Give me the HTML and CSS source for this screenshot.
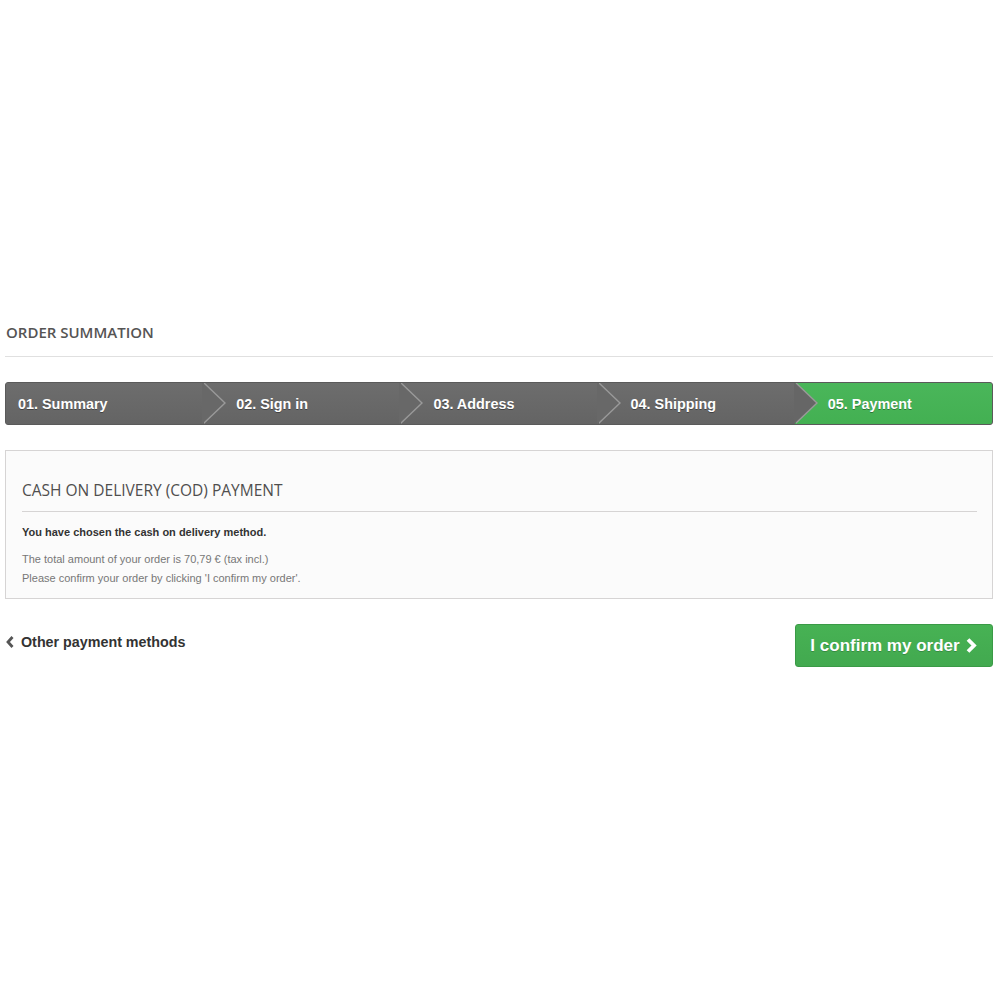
FILE: index.html
```html
<!DOCTYPE html>
<html>
<head>
<meta charset="utf-8">
<link rel="stylesheet" href="styles.css">
</head>
<body>
<div class="page">
  <h1 class="page-heading">Order summation</h1>
  <ul class="steps">
    <li class="step"><span>01. Summary</span></li>
    <li class="step"><span>02. Sign in</span></li>
    <li class="step"><span>03. Address</span></li>
    <li class="step"><span>04. Shipping</span></li>
    <li class="step current"><span>05. Payment</span></li>
  </ul>
  <div class="box">
    <h3 class="box-heading">Cash on delivery (COD) payment</h3>
    <p class="strong">You have chosen the cash on delivery method.</p>
    <p class="info">The total amount of your order is 70,79 € (tax incl.)<br>Please confirm your order by clicking 'I confirm my order'.</p>
  </div>
  <div class="nav">
    <a class="back"><svg class="chev-l" width="10" height="14" viewBox="0 0 10 14"><polyline points="7.5,2 3,7 7.5,12" fill="none" stroke="#555" stroke-width="2.8"/></svg>Other payment methods</a>
    <button class="confirm">I confirm my order<svg class="chev-r" width="13" height="17" viewBox="0 0 13 17"><polyline points="3,2.5 9,8.5 3,14.5" fill="none" stroke="#fff" stroke-width="3.8"/></svg></button>
  </div>
</div>
</body>
</html>
```
FILE: styles.css
```css
* { box-sizing: border-box; }
body { margin: 0; background: #fff; font-family: "Liberation Sans", Arial, sans-serif; }
.page { padding: 322px 7px 0 5px; }
.page-heading {
  margin: 0; padding: 0 0 14px 1px;
  font-family: "Open Sans", sans-serif; font-weight: 600; font-size: 15px; color: #555454;
  text-transform: uppercase; border-bottom: 1px solid #e0e0e0; line-height: 20px;
}
.steps {
  list-style: none; margin: 25px 0 0; padding: 0; display: grid;
  grid-template-columns: repeat(5, minmax(0, 1fr)); height: 43px;
  border: 1px solid #5a5a5a; border-radius: 3px; overflow: hidden;
  background: #676767;
}
.step {
  position: relative; display: flex; align-items: center;
  padding-left: 33px; color: #fff; font-weight: bold; font-size: 14.4px;
  text-shadow: 0 1px 0 rgba(0,0,0,0.35);
  background: linear-gradient(#6d6d6d, #646464);
}
.step:first-child { padding-left: 12px; }
.step:not(:last-child)::before {
  content: ""; position: absolute; right: -23px; top: -1px; z-index: 2;
  border-left: 22px solid #9a9a9a; border-top: 21.5px solid transparent; border-bottom: 21.5px solid transparent;
}
.step:not(:last-child)::after {
  content: ""; position: absolute; right: -21px; top: -1px; z-index: 3;
  border-left: 22px solid #686868; border-top: 21.5px solid transparent; border-bottom: 21.5px solid transparent;
}
.step span { position: relative; z-index: 4; }
.step.current { background: linear-gradient(#4ab65a, #43b052); }
.step:nth-child(4)::after { border-left-color: #666; }
.box {
  margin-top: 25px; background: #fbfbfb; border: 1px solid #d6d4d4;
  padding: 29px 15px 10px 16px;
}
.box-heading {
  margin: 0 0 11px; padding-bottom: 11px; border-bottom: 1px solid #d6d4d4;
  font-family: "Open Sans", sans-serif; font-weight: 400; font-size: 15.5px; color: #4f4e4e;
  text-transform: uppercase; line-height: 20px;
}
.strong { margin: 0 0 9px; font-size: 11px; font-weight: bold; color: #333; line-height: 18px; }
.info { margin: 0; font-size: 11px; color: #777; line-height: 19px; }
.nav { display: flex; justify-content: space-between; align-items: center; margin-top: 25px; }
.back {
  display: flex; align-items: center; font-weight: bold; font-size: 14.3px; color: #333;
  padding-left: 0; margin-top: -7px;
}
.chev-l { margin-right: 6px; }
.confirm {
  display: flex; align-items: center; gap: 5px; height: 43px; width: 198px; justify-content: center;
  background: linear-gradient(#47b254, #42a94f); border: 1px solid #3a9a46; border-radius: 3px;
  color: #fff; font-family: "Liberation Sans", Arial, sans-serif; font-weight: bold; font-size: 17px;
  text-shadow: 0 1px 0 rgba(0,0,0,0.2); padding: 0;
}
```
